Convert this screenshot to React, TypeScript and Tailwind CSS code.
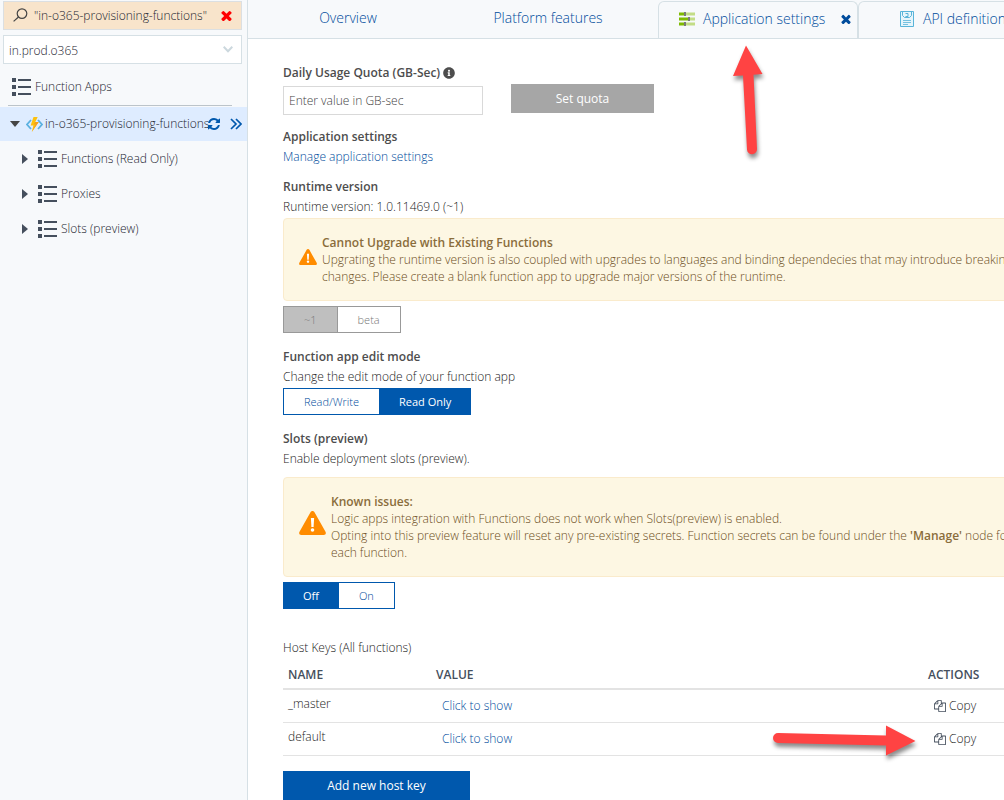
import { useState } from "react";
import type { ReactNode } from "react";
import { FaInfoCircle } from "react-icons/fa";

function TimesIcon({ className }: { className: string }) {
  return (
    <svg viewBox="256 256 1280 1280" className={className} fill="currentColor" aria-hidden="true">
      <path d="M1490 1322q0 40-28 68l-136 136q-28 28-68 28t-68-28l-294-294-294 294q-28 28-68 28t-68-28l-136-136q-28-28-28-68t28-68l294-294-294-294q-28-28-28-68t28-68l136-136q28-28 68-28t68 28l294 294 294-294q28-28 68-28t68 28l136 136q28 28 28 68t-28 68l-294 294 294 294q28 28 28 68z" />
    </svg>
  );
}

function RefreshIcon() {
  return (
    <svg viewBox="0 128 1536 1536" className="size-3" fill="currentColor" aria-hidden="true">
      <path d="M1511 1056q0 5-1 7-64 268-268 434.5t-478 166.5q-146 0-282.5-55t-243.5-157l-129 129q-19 19-45 19t-45-19-19-45v-448q0-26 19-45t45-19h448q26 0 45 19t19 45-19 45l-137 137q71 66 161 102t187 36q134 0 250-65t186-179q11-17 53-117 8-23 30-23h192q13 0 22.5 9.5t9.5 22.5zm25-800v448q0 26-19 45t-45 19h-448q-26 0-45-19t-19-45 19-45l138-138q-148-137-349-137-134 0-250 65t-186 179q-11 17-53 117-8 23-30 23h-199q-13 0-22.5-9.5t-9.5-22.5v-7q65-268 270-434.5t480-166.5q146 0 284 55.5t245 156.5l130-129q19-19 45-19t45 19 19 45z" />
    </svg>
  );
}

function CopyIcon() {
  return (
    <svg viewBox="0 0 1792 1792" className="size-3" fill="#454f5d" aria-hidden="true">
      <path d="M1696 384q40 0 68 28t28 68v1216q0 40-28 68t-68 28h-960q-40 0-68-28t-28-68v-288h-544q-40 0-68-28t-28-68v-672q0-40 20-88t48-76l408-408q28-28 76-48t88-20h416q40 0 68 28t28 68v328q68-40 128-40h416zm-544 213l-299 299h299v-299zm-640-384l-299 299h299v-299zm196 647l316-316v-416h-384v416q0 40-28 68t-68 28h-416v640h512v-256q0-40 20-88t48-76zm956 804v-1152h-384v416q0 40-28 68t-68 28h-416v640h896z" />
    </svg>
  );
}

function ListIcon() {
  return (
    <svg viewBox="0 0 19 18" className="h-[18px] w-[19px] shrink-0" fill="#454f5d" shapeRendering="crispEdges" aria-hidden="true">
      <path d="M0 0h4v4H0zM0 7h4v4H0zM0 14h4v4H0zM6 1h13v2H6zM6 8h13v2H6zM6 15h13v2H6z" />
    </svg>
  );
}

function SearchIcon() {
  return (
    <svg viewBox="0 0 15 15" className="size-[15px] shrink-0" fill="none" stroke="#454545" strokeWidth="1.2" aria-hidden="true">
      <circle cx="9" cy="5.6" r="4.8" />
      <path d="M5.5 9 .6 13.4" />
    </svg>
  );
}

function FunctionIcon() {
  return (
    <svg viewBox="0 0 17 15" className="h-[15px] w-[17px] shrink-0" aria-hidden="true">
      <path d="M5 3 1 7.5 5 12M12 3l4 4.5L12 12" fill="none" stroke="#5ab1e0" strokeWidth="1.8" />
      <path d="M7.5 0h4.2L9.3 5h3.4L5.8 15l1.6-6.4H4.6z" fill="#fcc10f" />
      <path d="M9.3 5h3.4L5.8 15 9.6 7.6H7.5z" fill="#f5a01c" />
    </svg>
  );
}

function SettingsIcon() {
  return (
    <svg viewBox="0 0 16 14" className="h-[14px] w-4" aria-hidden="true">
      <path d="M0 .5h6v3H0zM0 5.500h10v3H0zM0 10.500h6v3H0z" fill="#7fba00" />
      <path d="M6 .5h10v3H6zM10 5.500h6v3h-6zM6 10.500h10v3H6z" fill="#c3dd86" />
      <path d="M5 0h2v4H5zM9 5h2v4H9zM5 10h2v4H5z" fill="#7a7a7a" />
    </svg>
  );
}

function ApiIcon() {
  return (
    <svg viewBox="0 0 14 16" className="h-4 w-[14px]" fill="none" stroke="#59b4d9" aria-hidden="true">
      <path d="M.5.5h13v15H.5z" fill="#e6f5fb" />
      <path d="M2.500.5v4l2 2h5l2-2v-4M5.500 2.500h2.500v3H5.500" />
      <path d="M3 9.500h8M3 11.500h8M3 13.500h5" strokeWidth=".8" />
    </svg>
  );
}

function WarningIcon({ className }: { className: string }) {
  return (
    <svg viewBox="0 0 27 24" className={className} aria-hidden="true">
      <path d="M13.5 0c1 0 1.6.6 2 1.3l11 19.4c.9 1.7.1 3.3-1.8 3.3H2.3C.4 24-.4 22.4.5 20.7l11-19.4c.4-.7 1-1.3 2-1.3z" fill="#ff8c00" />
      <path d="M11.9 7h3.2l-.5 9h-2.2z" fill="#fff" />
      <circle cx="13.5" cy="19" r="1.8" fill="#fff" />
    </svg>
  );
}

function TreeItem({ label }: { label: string }) {
  return (
    <li className="flex h-[35px] items-center pl-[22px]">
      <svg viewBox="0 0 6 10" className="mr-[10px] h-[10px] w-[6px]" fill="#454f5d" aria-hidden="true">
        <path d="M0 0 6 5 0 10z" />
      </svg>
      <ListIcon />
      <span className="ml-1">{label}</span>
    </li>
  );
}

function Heading({ children }: { children: ReactNode }) {
  return <h2 className="flex items-center gap-1 font-semibold leading-5 text-[#4d4d4d]">{children}</h2>;
}

type ToggleProps = { label: string; options: string[]; initial: number; disabled?: boolean };

function Toggle({ label, options, initial, disabled = false }: ToggleProps) {
  const [active, setActive] = useState(initial);
  return (
    <div role="group" aria-label={label} className="flex">
      {options.map((option, i) => {
        const tone = disabled
          ? i === active
            ? "border-[#999] bg-[#bfbfbf] px-5 text-[#777]"
            : "border-[#999] bg-white px-5 text-[#777]"
          : i === active
            ? "border-[#0058ad] bg-[#0058ad] px-[19px] font-normal text-white"
            : "border-[#0058ad] bg-white px-5 text-[#004c9c]";
        return (
          <button
            key={option}
            type="button"
            disabled={disabled}
            aria-pressed={i === active}
            onClick={() => setActive(i)}
            className={`h-[27px] border text-[11px] leading-5 not-first:border-l-0 ${tone}`}
          >
            {option}
          </button>
        );
      })}
    </div>
  );
}

function Alert({ icon, children }: { icon: ReactNode; children: ReactNode }) {
  return (
    <div className="-mr-8 flex items-center gap-[5px] rounded-[4px] border border-[#faebcc] bg-[#fdf7e3] px-[15px] py-[15px] whitespace-nowrap text-[#6b4c1a]">
      {icon}
      <p className="leading-[17px]">{children}</p>
    </div>
  );
}

function KeyRow({ name }: { name: string }) {
  return (
    <tr className="h-[33px] border-b border-[#e3e3e3]">
      <td className="pb-1 pl-[5px]">{name}</td>
      <td className="pl-[6px] pt-[1px]">
        <button type="button" className="text-[#004c9c]">Click to show</button>
      </td>
      <td className="pt-[1px]">
        <button type="button" className="ml-[6px] flex items-center gap-[3px]">
          <CopyIcon />
          Copy
        </button>
      </td>
    </tr>
  );
}

export default function App() {
  const [query, setQuery] = useState('"in-o365-provisioning-functions"');
  return (
    <div className="relative flex min-h-screen overflow-hidden bg-white font-['Open_Sans',sans-serif] text-[12px] leading-5 font-light text-[#1a1a1a]">
      <aside className="w-[248px] shrink-0 border-r border-[#d6e0e5] bg-[#f7f9fb] pt-[1px] text-[#1c2430]">
        <div className="ml-[3px] mr-[5px] flex h-[29px] items-center border border-[#dbdfe2] bg-[#f8e4cb] px-[9px]">
          <SearchIcon />
          <input
            aria-label="Search function apps"
            value={query}
            onChange={(e) => setQuery(e.target.value)}
            className="ml-[6px] min-w-0 flex-1 bg-transparent pt-[1px] outline-none"
          />
          <button type="button" aria-label="Clear search" className="text-[#f00]">
            <TimesIcon className="size-[11px]" />
          </button>
        </div>
        <div className="relative ml-[3px] mr-[5px] mt-[5px]">
          <select aria-label="Subscription" className="h-[29px] w-full appearance-none border border-[#d6e0e5] bg-white px-[5px] pt-[2px]">
            <option>in.prod.o365</option>
          </select>
          <svg viewBox="0 0 10 7" className="pointer-events-none absolute right-[9px] top-[11px] h-[7px] w-[10px]" fill="none" stroke="#ccd8de" strokeWidth="2" aria-hidden="true">
            <path d="m.7.8 4.3 4.4L9.3.8" />
          </svg>
        </div>
        <div className="ml-2 mr-[15px] mt-[5px] flex h-[37px] items-center gap-1 border-b border-[#bcc4ca] pl-1">
          <ListIcon />
          Function Apps
        </div>
        <div className="mt-[1px] flex h-[34px] items-center bg-[#deecff] pl-[10px]">
          <svg viewBox="0 0 10 6" className="mr-[6px] h-[6px] w-[10px] shrink-0" fill="#454545" aria-hidden="true">
            <path d="M0 0h10L5 6z" />
          </svg>
          <FunctionIcon />
          <span className="ml-[2px] w-[163px] shrink-0 whitespace-nowrap">in-o365-provisioning-functions</span>
          <button type="button" aria-label="Refresh" className="text-[#0058ad]">
            <RefreshIcon />
          </button>
          <button type="button" aria-label="Expand" className="ml-[10px]">
            <svg viewBox="0 0 12 12" className="h-3 w-3" fill="none" stroke="#0058ad" strokeWidth="1.7" aria-hidden="true">
              <path d="m1 1 5 5-5 5M6 1l5 5-5 5" />
            </svg>
          </button>
        </div>
        <ul>
          <TreeItem label="Functions (Read Only)" />
          <TreeItem label="Proxies" />
          <TreeItem label="Slots (preview)" />
        </ul>
      </aside>

      <main className="min-w-0 flex-1 overflow-hidden">
        <nav className="flex h-[39px] items-end border-b border-[#d6e0e5] bg-[#f7f9fb] text-[14px] whitespace-nowrap text-[#004c9c]">
          <a href="#overview" className="flex h-[38px] w-[200px] shrink-0 items-center justify-center pb-[2px]">Overview</a>
          <a href="#features" className="mr-[10px] flex h-[38px] w-[200px] shrink-0 items-center justify-center pb-[2px]">Platform features</a>
          <div className="flex h-[37px] w-[200px] shrink-0 items-center rounded-t-[6px] border border-b-0 border-[#d6e0e5] pb-[2px] pl-5">
            <SettingsIcon />
            <a href="#settings" className="ml-2">Application settings</a>
            <button type="button" aria-label="Close tab" className="ml-auto mr-[6px]">
              <TimesIcon className="size-[10px]" />
            </button>
          </div>
          <a href="#api" className="flex h-[37px] w-[200px] shrink-0 items-center gap-[9px] rounded-t-[6px] border border-b-0 border-[#d6e0e5] pb-[2px] pl-[41px]">
            <ApiIcon />
            API definition
          </a>
        </nav>

        <div className="pl-[35px] pt-6">
          <div className="flex items-end">
            <div className="w-[200px]">
              <label htmlFor="quota" className="flex items-center gap-[3px] font-semibold whitespace-nowrap text-[#4d4d4d]">
                Daily Usage Quota (GB-Sec)
                <FaInfoCircle className="size-3" />
              </label>
              <input id="quota" placeholder="Enter value in GB-sec" className="mt-[3px] block h-[29px] w-full border border-[#d9d9d9] px-[5px] placeholder:text-[#444]" />
            </div>
            <button type="button" className="mb-[2px] ml-7 h-[29px] w-[143px] bg-[#a6a6a6] font-normal text-white">Set quota</button>
          </div>

          <section className="mt-3">
            <Heading>Application settings</Heading>
            <a href="#manage" className="block text-[#004c9c]">Manage application settings</a>
          </section>

          <section className="mt-[10px]">
            <Heading>Runtime version</Heading>
            <p className="mb-[1px]">Runtime version: 1.0.11469.0 (~1)</p>
            <Alert icon={<WarningIcon className="mt-[-6px] h-4 w-[18px] shrink-0" />}>
              <strong className="font-semibold text-[#8a6d3b]">Cannot Upgrade with Existing Functions</strong>
              <br />
              Upgrating the runtime version is also coupled with upgrades to languages and binding dependecies that may introduce breaking
              <br />
              changes. Please create a blank function app to upgrade major versions of the runtime.
            </Alert>
            <div className="mt-[5px]">
              <Toggle label="Runtime version" options={["~1", "beta"]} initial={0} disabled />
            </div>
          </section>

          <section className="mt-[14px]">
            <Heading>Function app edit mode</Heading>
            <p className="mb-[1px]">Change the edit mode of your function app</p>
            <Toggle label="Function app edit mode" options={["Read/Write", "Read Only"]} initial={1} />
          </section>

          <section className="mt-[14px]">
            <Heading>Slots (preview)</Heading>
            <p className="mb-2">Enable deployment slots (preview).</p>
            <Alert icon={<WarningIcon className="mt-[-8px] h-6 w-[27px] shrink-0" />}>
              <strong className="font-semibold text-[#8a6d3b]">Known issues:</strong>
              <br />
              Logic apps integration with Functions does not work when Slots(preview) is enabled.
              <br />
              Opting into this preview feature will reset any pre-existing secrets. Function secrets can be found under the{" "}
              <strong className="font-semibold text-[#8a6d3b]">'Manage'</strong> node for
              <br />
              each function.
            </Alert>
            <div className="mt-[5px]">
              <Toggle label="Slots" options={["Off", "On"]} initial={0} />
            </div>
          </section>

          <section className="mt-[29px]">
            <table className="w-full table-fixed border-collapse text-left">
              <caption className="text-left">Host Keys (All functions)</caption>
              <thead>
                <tr className="h-[31px] border-b-2 border-[#e3e3e3] text-[#454f5d]">
                  <th scope="col" className="w-[153px] pl-[5px] pt-[3px] font-semibold">NAME</th>
                  <th scope="col" className="pt-[3px] font-semibold">VALUE</th>
                  <th scope="col" className="w-[76px] pt-[3px] font-semibold">ACTIONS</th>
                </tr>
              </thead>
              <tbody>
                <KeyRow name="_master" />
                <KeyRow name="default" />
              </tbody>
            </table>
            <button type="button" className="mt-[15px] h-[29px] w-[187px] bg-[#0058ad] pt-[1px] font-medium text-white">Add new host key</button>
          </section>
        </div>
      </main>

      <svg viewBox="0 0 40 125" className="pointer-events-none absolute left-[728px] top-[40px] h-[125px] w-10 drop-shadow-[1px_4px_2px_rgba(0,0,0,0.45)]" aria-hidden="true">
        <path d="M18 5.5 34.5 34l-9 .7L29 109a5 5 0 0 1-10 .5L15 35.5 5 36z" fill="#ff4343" />
      </svg>
      <svg viewBox="0 0 150 42" className="pointer-events-none absolute left-[770px] top-[720px] h-[42px] w-[150px] drop-shadow-[1px_4px_2px_rgba(0,0,0,0.45)]" aria-hidden="true">
        <path d="M8 13 116 15.5V5.500L145.500 21 116 35.500V25.500L8 23A5 5 0 0 1 8 13z" fill="#ff4343" />
      </svg>
    </div>
  );
}
